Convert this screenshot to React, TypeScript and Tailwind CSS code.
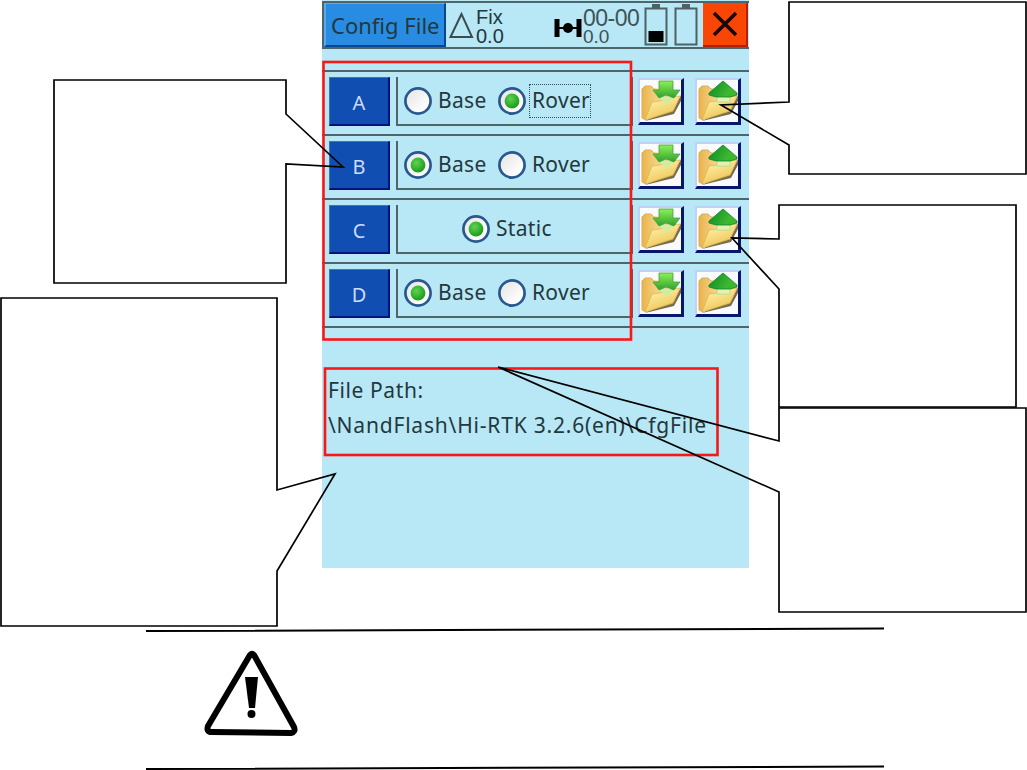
type Mode = "Base" | "Rover" | "Static";

type RowProps = {
  name: string;
  modes: Mode[];
  selected: Mode;
  focused?: Mode;
};

const rows: RowProps[] = [
  { name: "A", modes: ["Base", "Rover"], selected: "Rover", focused: "Rover" },
  { name: "B", modes: ["Base", "Rover"], selected: "Base" },
  { name: "C", modes: ["Static"], selected: "Static" },
  { name: "D", modes: ["Base", "Rover"], selected: "Base" },
];

// speech bubbles around the device
const callouts = [
  "789,2 1026,2 1026,174 789,174 789,145 721,105 789,102",
  "54,80 286,80 286,114 343,167 286,164 286,283 54,283",
  "779,205 1016,205 1016,407 779,407 779,289 732,238 779,239",
  "779,408 1026,408 1026,612 779,612 779,492 498,367 779,441",
  "1,298 277,298 277,490 335,474 277,571 277,626 1,626",
];

function Radio({ checked }: { checked: boolean }) {
  return (
    <svg width="28" height="28" viewBox="0 0 28 28" className="shrink-0">
      <defs>
        <linearGradient id="knob" x1="0" y1="0" x2="1" y2="1">
          <stop offset="0.3" stopColor="#ededee" />
          <stop offset="0.8" stopColor="#ffffff" />
        </linearGradient>
        <radialGradient id="dot" cx="0.4" cy="0.35" r="0.7">
          <stop offset="0" stopColor="#5dd452" />
          <stop offset="1" stopColor="#189718" />
        </radialGradient>
      </defs>
      <circle cx="14" cy="14" r="12.6" fill="url(#knob)" stroke="#28588c" strokeWidth="2.7" />
      {checked && <circle cx="14" cy="14" r="7.4" fill="url(#dot)" />}
    </svg>
  );
}

function FolderButton({ up }: { up?: boolean }) {
  return (
    <button className="h-[47px] w-[46px] border-t-2 border-r-[3px] border-b-[3px] border-l-2 border-t-[#bdd2fb] border-r-[#07186c] border-b-[#07186c] border-l-[#c4d0fa] bg-[#fafbff]">
      <svg width="41" height="42" viewBox="0 0 41 42">
        <defs>
          <linearGradient id="back" x1="0" y1="0" x2="1" y2="0">
            <stop offset="0" stopColor="#e8b44c" />
            <stop offset="1" stopColor="#fbe5ac" />
          </linearGradient>
          <linearGradient id="front" x1="0" y1="0" x2="0.5" y2="1">
            <stop offset="0" stopColor="#fff8b8" />
            <stop offset="1" stopColor="#efc554" />
          </linearGradient>
          <linearGradient id="down" x1="0" y1="0" x2="0" y2="1">
            <stop offset="0" stopColor="#8df05c" />
            <stop offset="1" stopColor="#319f2a" />
          </linearGradient>
          <linearGradient id="up" x1="0" y1="0" x2="1" y2="0.3">
            <stop offset="0.3" stopColor="#1d9a2b" />
            <stop offset="0.8" stopColor="#3cb72e" />
          </linearGradient>
        </defs>
        <path d="M5 41 L34 34 L41 21 V15 L34 29 L9 39z" fill="#584a20" opacity="0.8" />
        <path d="M2 9 L5 6 H11 L14 9 L27 10 V20 L6 40 L2 38z" fill="url(#back)" stroke="#dfad4e" />
        <path d="M12 22 L27 20 L30 17 L40 16 L33 31 L5 40z" fill="url(#front)" stroke="#dfb64c" strokeWidth="0.8" />
        {up ? (
          <>
            <path d="M20 15 H33 V22 H20z" fill="#e1f2b2" stroke="#b9d88b" strokeWidth="0.8" />
            <path d="M26 1 L40 13 V15 L33 17 H19 L12 15 V13z" fill="url(#up)" stroke="#168326" strokeWidth="0.8" />
          </>
        ) : (
          <>
            <path d="M19 17 H34 L26 25z" fill="#cceea2" />
            <path d="M19 1 H33 V10 H40 L34 18 L26 15 L19 18 L13 10 H19z" fill="url(#down)" stroke="#3da336" strokeWidth="0.8" />
          </>
        )}
      </svg>
    </button>
  );
}

function ConfigRow({ name, modes, selected, focused }: RowProps) {
  return (
    <div className="flex h-16 border-t-2 border-[#506568] pt-[5px] pl-[7px]">
      <button className="h-[49px] w-[61px] border-t border-r-2 border-b-2 border-l border-t-[#3c73d0] border-r-[#00107c] border-b-[#00107c] border-l-[#3c73d0] bg-[#104eb2] pt-1 text-[20px] leading-none text-[#cbdcff]">
        {name}
      </button>
      <div
        className={`ml-[6px] flex h-[49px] w-[237px] items-center border-r-2 border-b-2 border-l-2 border-[#506568] ${
          modes.length === 1 ? "pl-[64px]" : "pl-[6px]"
        }`}
      >
        {modes.map((mode) => (
          <label key={mode} className="flex items-center">
            <Radio checked={mode === selected} />
            <span
              className={`ml-[3px] flex h-[34px] items-center border pl-[2px] text-[21px] tracking-[0.3px] ${
                mode === "Base" ? "w-[63px]" : "w-[62px]"
              } ${mode === focused ? "border-dotted border-[#344c52]" : "border-transparent"}`}
            >
              {mode}
            </span>
          </label>
        ))}
      </div>
      <div className="ml-[5px] flex gap-[11px] pt-px">
        <FolderButton />
        <FolderButton up />
      </div>
    </div>
  );
}

function Battery({ low }: { low?: boolean }) {
  return (
    <svg width="24" height="42" viewBox="0 0 24 42">
      <path d="M9 4 V1 H15 V4" fill="#4e6266" stroke="#4e6266" strokeWidth="2" />
      <rect x="1.5" y="4.5" width="21" height="36" fill="none" stroke="#4e6266" strokeWidth="2" />
      {low && <rect x="4.5" y="27" width="15" height="11" fill="#000" />}
    </svg>
  );
}

function Header() {
  return (
    <div className="flex h-[48px] border-2 border-r-0 border-[#506568]">
      <div className="h-[44px] w-[122px] border-t border-r-2 border-b-2 border-l-2 border-t-[#58aaf0] border-r-[#064596] border-b-[#064596] border-l-[#58aaf0] bg-[#288de2] pt-[4px] pl-[5px] text-[22px] leading-[34px] whitespace-nowrap">
        Config File
      </div>
      <svg width="26" height="30" viewBox="0 0 26 30" className="mt-[8px] ml-[2px]">
        <path d="M13.5 3 L2.500 26 H24z" fill="none" stroke="#3b4b4e" strokeWidth="2" />
      </svg>
      <div className="ml-[2px] w-[77px] pt-[5px] font-['Liberation_Sans'] text-[20px] leading-[19px]">
        <p>Fix</p>
        <p>0.0</p>
      </div>
      <svg width="30" height="22" viewBox="0 0 30 22" className="mt-[14px]">
        <path d="M4 2 V20 M26 2 V20" stroke="#000" strokeWidth="5" />
        <path d="M4 11 H26" stroke="#000" strokeWidth="2" />
        <circle cx="15" cy="11" r="5" fill="#000" />
      </svg>
      <div className="w-[61px] pt-[5px] font-['Liberation_Sans'] text-[#3f5255]">
        <p className="text-[23px] leading-[20px] tracking-[-0.5px]">00-00</p>
        <p className="text-[19px] leading-[18px]">0.0</p>
      </div>
      <div className="flex gap-[6px] pt-px">
        <Battery low />
        <Battery />
      </div>
      <div className="ml-[5px] flex h-[44px] w-[45px] items-center justify-center border-r-2 border-b-2 border-[#b22202] bg-[#fa4605]">
        <svg width="26" height="26" viewBox="0 0 26 26">
          <path d="M2 2 L24 24 M24 2 L2 24" stroke="#180900" strokeWidth="3.6" />
        </svg>
      </div>
    </div>
  );
}

function Annotations() {
  return (
    <svg className="pointer-events-none absolute top-0 left-0" width="1027" height="770" viewBox="0 0 1027 770" fill="none">
      <rect x="323.5" y="62" width="307.500" height="277.500" stroke="#fa1717" strokeWidth="2.6" />
      <rect x="325" y="368.500" width="392.500" height="86.500" stroke="#fa1717" strokeWidth="2.6" />
      {callouts.map((points) => (
        <polygon key={points} points={points} stroke="#000" strokeWidth="1.7" />
      ))}
    </svg>
  );
}

export default function App() {
  return (
    <div className="relative h-[770px] w-[1027px] overflow-hidden bg-white font-['Noto_Sans',sans-serif] text-[#23383d]">
      <div className="ml-[322px] h-[568px] w-[427px] bg-[#b8e7f6] pt-px">
        <Header />
        <div className="mt-[21px] border-b-2 border-[#506568]">
          {rows.map((row) => (
            <ConfigRow key={row.name} {...row} />
          ))}
        </div>
        <div className="mt-[45px] pl-[6px] text-[21px] leading-[35px] whitespace-nowrap">
          <p className="tracking-[0.6px]">File Path:</p>
          <p className="tracking-[0.8px]">\NandFlash\Hi-RTK 3.2.6(en)\CfgFile</p>
        </div>
      </div>

      {/* warning note */}
      <svg width="740" height="144" viewBox="0 0 740 144" className="mt-[59px] ml-[145px]" fill="none">
        <path d="M1 4 L739 1.500 M1 142 L739 139.500" stroke="#000" strokeWidth="2" />
        <path d="M105 28 L63 99 Q61 105 67 105 L146 106 Q151 105 149 100 L109 28 Q107 26 105 28z" stroke="#000" strokeWidth="6" strokeLinejoin="round" />
        <path d="M100 50 H113 L110 81 H104z" fill="#000" />
        <circle cx="106.500" cy="87" r="4" fill="#000" />
      </svg>

      <Annotations />
    </div>
  );
}
